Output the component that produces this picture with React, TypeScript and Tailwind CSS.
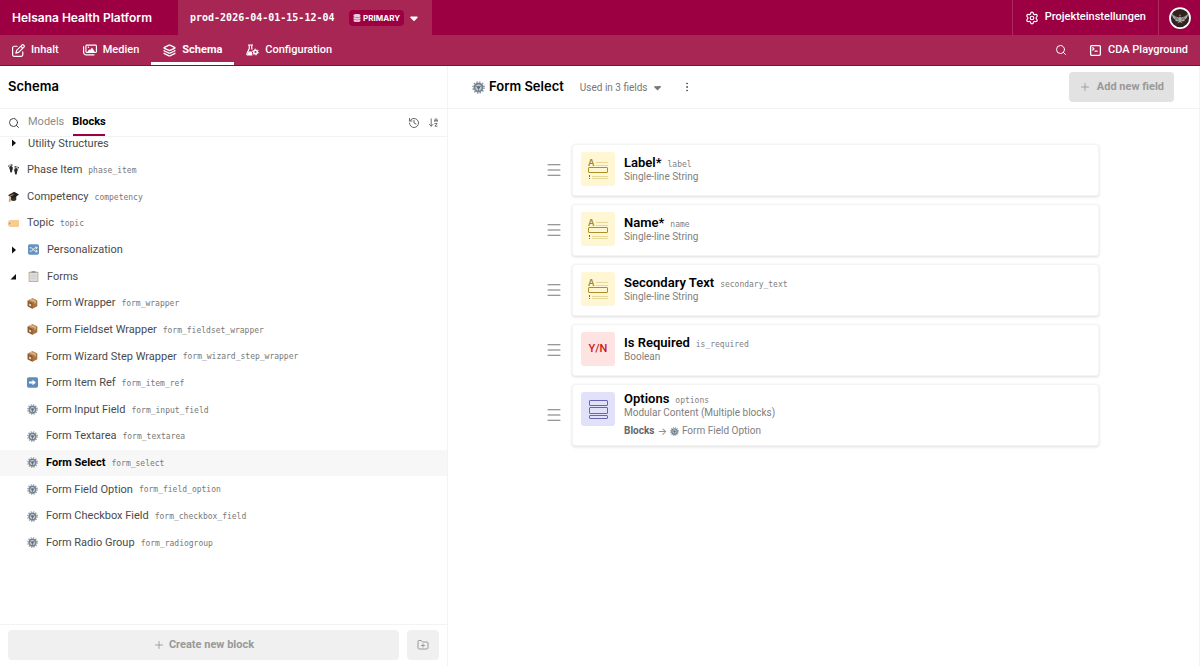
import type { ReactNode } from 'react';
import {
    ArrowDownAZ,
    EllipsisVertical,
    FolderPlus,
    History,
    Layers,
    Menu,
    Plus,
    Search,
    Settings,
    SquareTerminal,
} from 'lucide-react';
import { FaCaretDown, FaDatabase, FaRegImages, FaRegPenToSquare } from 'react-icons/fa6';

type IconName = 'feet' | 'cap' | 'label' | 'shuffle' | 'clipboard' | 'box' | 'arrow' | 'gear';

interface BlockRow {
    name: string;
    apiKey?: string;
    icon?: IconName;
    group?: 'open' | 'closed';
    nested?: boolean;
    active?: boolean;
}

interface Field {
    name: string;
    apiKey: string;
    type: string;
    kind: 'string' | 'boolean' | 'modular';
    blocks?: string;
}

const rows: BlockRow[] = [
    { name: 'Utility Structures', group: 'closed' },
    { name: 'Phase Item', apiKey: 'phase_item', icon: 'feet' },
    { name: 'Competency', apiKey: 'competency', icon: 'cap' },
    { name: 'Topic', apiKey: 'topic', icon: 'label' },
    { name: 'Personalization', icon: 'shuffle', group: 'closed' },
    { name: 'Forms', icon: 'clipboard', group: 'open' },
    { name: 'Form Wrapper', apiKey: 'form_wrapper', icon: 'box', nested: true },
    { name: 'Form Fieldset Wrapper', apiKey: 'form_fieldset_wrapper', icon: 'box', nested: true },
    { name: 'Form Wizard Step Wrapper', apiKey: 'form_wizard_step_wrapper', icon: 'box', nested: true },
    { name: 'Form Item Ref', apiKey: 'form_item_ref', icon: 'arrow', nested: true },
    { name: 'Form Input Field', apiKey: 'form_input_field', icon: 'gear', nested: true },
    { name: 'Form Textarea', apiKey: 'form_textarea', icon: 'gear', nested: true },
    { name: 'Form Select', apiKey: 'form_select', icon: 'gear', nested: true, active: true },
    { name: 'Form Field Option', apiKey: 'form_field_option', icon: 'gear', nested: true },
    { name: 'Form Checkbox Field', apiKey: 'form_checkbox_field', icon: 'gear', nested: true },
    { name: 'Form Radio Group', apiKey: 'form_radiogroup', icon: 'gear', nested: true },
];

const fields: Field[] = [
    { name: 'Label*', apiKey: 'label', type: 'Single-line String', kind: 'string' },
    { name: 'Name*', apiKey: 'name', type: 'Single-line String', kind: 'string' },
    { name: 'Secondary Text', apiKey: 'secondary_text', type: 'Single-line String', kind: 'string' },
    { name: 'Is Required', apiKey: 'is_required', type: 'Boolean', kind: 'boolean' },
    {
        name: 'Options',
        apiKey: 'options',
        type: 'Modular Content (Multiple blocks)',
        kind: 'modular',
        blocks: 'Form Field Option',
    },
];

const mono = "font-['DejaVu_Sans_Mono',monospace]";
const display = 'font-[Inter,sans-serif]';

const glyphs: Record<IconName, ReactNode> = {
    feet: (
        <g fill="#2b2b2b">
            <path d="M2 4c2-2 5-1 5 2 0 2-1 3-1 4 0 3-3 3-3 0 0-2-2-4-1-6z" />
            <path d="M14 7c-2-2-5-1-5 2 0 2 1 2 1 4 0 3 3 3 3 0 0-2 2-4 1-6z" />
            <circle cx="1" cy="3" r="1" />
            <circle cx="3" cy="1.600" r="1" />
            <circle cx="5.500" cy="1.600" r="1.200" />
            <circle cx="15" cy="5.500" r="1" />
            <circle cx="13" cy="4.200" r="1" />
            <circle cx="10.500" cy="4.200" r="1.200" />
        </g>
    ),
    cap: (
        <g>
            <path d="M4 8v5c2 2 6 2 8 0V7z" fill="#333" />
            <path d="M0 6l9-5 7 4-8 6z" fill="#222" />
            <path d="M8 5L2.500 7.500V14" fill="none" stroke="#e8973c" strokeWidth="1.300" />
            <path d="M1.500 11.500h2.200v4H1z" fill="#e8973c" />
        </g>
    ),
    label: (
        <g>
            <path d="M3 3h12a1 1 0 0 1 1 1v8a1 1 0 0 1-1 1H3L0 11V5z" fill="#f7cb92" />
            <circle cx="2.500" cy="8" r="1" fill="#b98544" />
        </g>
    ),
    shuffle: (
        <g>
            <rect x="0" y="0.500" width="16" height="15" rx="2.500" fill="#6592be" />
            <path
                d="M2.500 5.500H5l5 5h3M2.500 10.500H5l5-5h3M11.500 3.500l2 2-2 2M11.500 8.500l2 2-2 2"
                fill="none"
                stroke="#fff"
                strokeWidth="1.300"
            />
        </g>
    ),
    clipboard: (
        <g>
            <rect x="1" y="1" width="14" height="15" rx="1" fill="#b09c86" />
            <rect x="2" y="2.500" width="12" height="12.500" fill="#dedede" />
            <rect x="5" y="0" width="6" height="3" rx="1" fill="#9a9a9a" />
            <path d="M4 6h8M4 8.500h8M4 11h8" stroke="#c2c2c2" strokeWidth="0.800" />
        </g>
    ),
    box: (
        <g>
            <path d="M8 0.500l7 3v8.500l-7 3.500L1 12V3.500z" fill="#a87444" />
            <path d="M1 3.500l7 3v9L1 12z" fill="#8e5c31" />
            <path d="M1 3.500l7-3 7 3-7 3z" fill="#c4935f" />
            <path d="M4 2.200l7 3v3l1.500-.7V4.600L5.500 1.500z" fill="#e7cfa5" />
            <path d="M3 8l3 1.300v3L3 11z" fill="#e5d6c2" />
        </g>
    ),
    arrow: (
        <g>
            <rect x="0" y="0.500" width="16" height="15" rx="2.500" fill="#5f8dba" />
            <path d="M3 6.500h5V4l5 4-5 4V9.500H3z" fill="#fff" />
        </g>
    ),
    gear: (
        <g>
            <circle cx="8" cy="8" r="6.800" fill="none" stroke="#8b98a5" strokeWidth="2" strokeDasharray="1.780 1.780" />
            <circle cx="8" cy="8" r="4.900" fill="#c3ccd4" stroke="#74828f" strokeWidth="2.200" />
            <circle cx="8" cy="8" r="1.800" fill="#5c6975" />
            <path d="M8 8l3.500-2M8 8v4M8 8L4.500 6" stroke="#5c6975" strokeWidth="0.900" />
        </g>
    ),
};

function Glyph({ name, className }: { name: IconName; className: string }) {
    return (
        <svg viewBox="0 0 16 16" className={`shrink-0 ${className}`} aria-hidden="true">
            {glyphs[name]}
        </svg>
    );
}

function FlaskGear() {
    return (
        <svg viewBox="0 0 26 24" className="h-3 w-[13px] shrink-0" aria-hidden="true">
            <path d="M4 2h10M6.500 2v7L2 19q-1 3 2 3h9M11.500 2v7l1 2" fill="none" stroke="currentColor" strokeWidth="2.400" />
            <path d="M5 15h7v7H3z" fill="currentColor" />
            <circle cx="19" cy="16" r="3.600" fill="none" stroke="currentColor" strokeWidth="3" />
            <circle cx="19" cy="16" r="5.800" fill="none" stroke="currentColor" strokeWidth="2" strokeDasharray="3 3.070" />
        </svg>
    );
}

function Avatar() {
    return (
        <svg viewBox="0 0 44 44" className="size-[22px]" aria-hidden="true">
            <circle cx="22" cy="22" r="20" fill="#33231f" stroke="#fff" strokeWidth="3.500" />
            <path
                d="M22 19l-2-4 2 1 2-1zM20 21C14 20 9 17 6 13c0 7 3 11 8 13l-2 1c3 2 5 2 8 1l-3 5 5-3 5 3-3-5c3 1 5 1 8-1l-2-1c5-2 8-6 8-13-3 4-8 7-14 8l-2-2z"
                fill="#a9abac"
            />
            <path d="M9 17l10 7M12 22l7 4M35 17l-10 7M32 22l-7 4" stroke="#4a3b37" strokeWidth="1" />
        </svg>
    );
}

function Tab({ icon, label, active }: { icon: ReactNode; label: string; active?: boolean }) {
    return (
        <a
            href="#"
            className={`flex items-center gap-[6px] border-y-[3px] border-t-transparent px-3 text-[11px] ${
                active ? 'border-b-white font-bold' : 'border-b-transparent font-medium'
            }`}
        >
            {icon}
            {label}
        </a>
    );
}

function TopBar() {
    return (
        <header className="shrink-0 text-white">
            <div className="flex h-[35px] items-stretch bg-[#9c0042]">
                <a href="#" className={`flex w-[178px] items-center pl-3 text-xs font-semibold ${display}`}>
                    Helsana Health Platform
                </a>
                <button className="flex w-[254px] items-center bg-[#a72653] px-3">
                    <span className={`text-[10px] font-bold ${mono}`}>prod-2026-04-01-15-12-04</span>
                    <span
                        className={`ml-auto flex h-4 items-center gap-[2px] rounded-sm bg-[#9c0042] px-1 text-[8px] font-bold ${display}`}
                    >
                        <FaDatabase className="size-2 opacity-80" />
                        PRIMARY
                    </span>
                    <FaCaretDown className="ml-1 size-3" />
                </button>
                <a
                    href="#"
                    className="ml-auto flex items-center gap-[6px] border-x border-[#ad2c5c] px-3 text-[11px] font-medium"
                >
                    <Settings className="size-[14px]" />
                    Projekteinstellungen
                </a>
                <button className="flex w-[41px] items-center justify-center" aria-label="Account">
                    <Avatar />
                </button>
            </div>
            <nav className="flex h-[31px] items-stretch border-b border-[#9c0042] bg-[#a72653]">
                <Tab icon={<FaRegPenToSquare className="size-[13px]" />} label="Inhalt" />
                <Tab icon={<FaRegImages className="size-[14px]" />} label="Medien" />
                <Tab icon={<Layers className="size-[13px]" strokeWidth={2.4} />} label="Schema" active />
                <Tab icon={<FlaskGear />} label="Configuration" />
                <button className="ml-auto px-[10px]" aria-label="Search">
                    <Search className="size-3" />
                </button>
                <Tab icon={<SquareTerminal className="size-[13px]" strokeWidth={2.4} />} label="CDA Playground" />
            </nav>
        </header>
    );
}

function TreeArrow({ open }: { open: boolean }) {
    return (
        <svg viewBox="0 0 10 10" className="size-[10px]" aria-hidden="true">
            <path d={open ? 'M7 3v5.500H1.500z' : 'M3 1.500L7 5 3 8.500z'} fill="#111" />
        </svg>
    );
}

function BlockItem({ row }: { row: BlockRow }) {
    return (
        <li className={`flex min-h-6 max-h-7 flex-1 ${row.active ? 'bg-[#f7f7f7]' : ''}`}>
            <a href="#" className={`flex w-full items-center ${row.nested ? 'pl-[27px]' : 'pl-2'}`}>
                {row.group && (
                    <span className={`flex justify-center ${row.icon ? 'w-5 pr-2' : 'w-3'}`}>
                        <TreeArrow open={row.group === 'open'} />
                    </span>
                )}
                {row.icon && <Glyph name={row.icon} className="size-[11px]" />}
                <span
                    className={`ml-2 pt-px text-[11px] ${row.active ? 'font-bold text-black' : 'text-[#4a4a4a]'}`}
                >
                    {row.name}
                </span>
                {row.apiKey && <span className={`ml-[6px] pt-[2px] text-[8px] text-[#777] ${mono}`}>{row.apiKey}</span>}
            </a>
        </li>
    );
}

function Sidebar() {
    return (
        <aside className="flex w-[448px] shrink-0 flex-col border-r border-[#f3f3f3]">
            <div className="flex h-[43px] shrink-0 items-center border-b border-[#f3f3f3] px-2">
                <h1 className={`text-[13px] font-semibold ${display}`}>Schema</h1>
            </div>
            <div className="flex h-7 shrink-0 items-stretch gap-2 border-b border-[#f3f3f3] px-2 text-[11px]">
                <button aria-label="Search blocks">
                    <Search className="size-3 text-[#333]" strokeWidth={1.8} />
                </button>
                <button className="text-[#8c8c8c]">Models</button>
                <button className="relative font-bold">
                    Blocks
                    <span className="absolute inset-x-px bottom-0 h-[2px] bg-[#9c0042]" />
                </button>
                <button className="ml-auto" aria-label="Recent">
                    <History className="size-3 text-[#666]" />
                </button>
                <button aria-label="Sort">
                    <ArrowDownAZ className="size-[11px] text-[#666]" />
                </button>
            </div>
            <div className="min-h-0 flex-1 overflow-hidden">
                <ul className="-mt-[7px] flex h-full flex-col pb-[61px]">
                    {rows.map(row => (
                        <BlockItem key={row.name} row={row} />
                    ))}
                </ul>
            </div>
            <div className="flex shrink-0 gap-2 border-t border-[#f3f3f3] px-2 pt-[5px] pb-[6px]">
                <button className="flex h-[30px] flex-1 items-center justify-center gap-1 rounded-sm bg-[#f0f0f0] text-[11px] font-bold text-[#999]">
                    <Plus className="size-3" strokeWidth={1.8} />
                    Create new block
                </button>
                <button
                    className="flex h-[30px] w-8 items-center justify-center rounded-sm bg-[#f0f0f0] text-[#999]"
                    aria-label="New folder"
                >
                    <FolderPlus className="size-3" />
                </button>
            </div>
        </aside>
    );
}

function FieldIcon({ kind }: { kind: Field['kind'] }) {
    if (kind === 'boolean') {
        return (
            <div className="flex size-[34px] shrink-0 items-center justify-center rounded-[3px] bg-[#fee3e3] text-[11px] font-medium text-[#cc1717]">
                Y/N
            </div>
        );
    }
    if (kind === 'modular') {
        return (
            <div className="size-[34px] shrink-0 rounded-[3px] bg-[#e2e1fa]">
                <svg viewBox="0 0 34 34" fill="none" stroke="#6765b0" aria-hidden="true">
                    <rect x="8.500" y="8.500" width="18" height="5" rx="0.500" />
                    <rect x="8.500" y="15.500" width="18" height="6" rx="0.500" />
                    <rect x="8.500" y="23.500" width="18" height="3" rx="0.500" />
                </svg>
            </div>
        );
    }
    return (
        <div className="size-[34px] shrink-0 rounded-[3px] bg-[#fff6d3]">
            <svg viewBox="0 0 34 34" fill="none" aria-hidden="true">
                <text x="7" y="14" fill="#a58a23" className={`text-[9px] font-semibold ${display}`}>
                    A
                </text>
                <path d="M15 10.500h12M15 13.500h12M11 24.500h16M11 26.500h16" stroke="#e6d898" />
                <rect x="7.500" y="15.500" width="19" height="5" rx="0.500" stroke="#ab902c" />
                <path d="M8.500 23v2M8.500 26v1" stroke="#8a7014" />
            </svg>
        </div>
    );
}

function FieldCard({ field }: { field: Field }) {
    return (
        <li className="flex items-center gap-[9px]">
            <button aria-label={`Move ${field.name}`}>
                <Menu className="size-[18px] text-[#777]" strokeWidth={1.4} />
            </button>
            <div className="flex min-h-[52px] flex-1 gap-[9px] rounded-[3px] border border-[#f4f4f4] bg-white px-2 py-[7px] shadow-[0_1px_3px_rgba(0,0,0,0.14)]">
                <FieldIcon kind={field.kind} />
                <div className="self-center text-[10px] leading-[14px] text-[#808080]">
                    <div className="flex h-[14px] items-baseline gap-[6px]">
                        <h3 className="text-[13px] leading-[14px] font-semibold text-black">{field.name}</h3>
                        <span className={`text-[8px] ${mono}`}>{field.apiKey}</span>
                    </div>
                    <p>{field.type}</p>
                    {field.blocks && (
                        <p className="flex items-center gap-[3px] pt-1">
                            <span className="font-bold text-[#666]">Blocks</span>
                            <span className={display}>→</span>
                            <Glyph name="gear" className="size-[9px]" />
                            {field.blocks}
                        </p>
                    )}
                </div>
            </div>
        </li>
    );
}

function Editor() {
    return (
        <main className="flex min-w-0 flex-1 flex-col border-r border-[#f3f3f3]">
            <div className="flex h-[43px] shrink-0 items-center border-b border-[#f3f3f3] pr-[25px] pl-6">
                <Glyph name="gear" className="size-[13px]" />
                <h2 className={`ml-1 text-[13px] font-semibold ${display}`}>Form Select</h2>
                <button className="ml-4 flex items-center gap-1 text-[10px] text-[#777]">
                    Used in 3 fields
                    <FaCaretDown className="size-[11px]" />
                </button>
                <button className="ml-[18px]" aria-label="More">
                    <EllipsisVertical className="size-3 text-[#555]" />
                </button>
                <button className="ml-auto flex h-[30px] items-center gap-[6px] rounded-sm bg-[#e2e2e2] px-[10px] text-[11px] font-bold text-[#999]">
                    <Plus className="size-3" strokeWidth={1.8} />
                    Add new field
                </button>
            </div>
            <ul className="flex flex-col gap-2 pt-[35px] pr-[100px] pl-[97px]">
                {fields.map(field => (
                    <FieldCard key={field.apiKey} field={field} />
                ))}
            </ul>
        </main>
    );
}

export default function App() {
    return (
        <div className="flex h-screen flex-col bg-white font-[Roboto,sans-serif] text-black">
            <TopBar />
            <div className="flex min-h-0 flex-1">
                <Sidebar />
                <Editor />
            </div>
        </div>
    );
}
